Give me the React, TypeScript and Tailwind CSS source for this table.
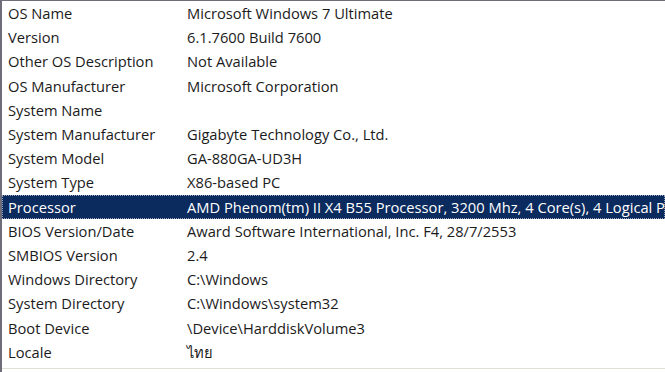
const rows: [string, string][] = [
  ['OS Name', 'Microsoft Windows 7 Ultimate'],
  ['Version', '6.1.7600 Build 7600'],
  ['Other OS Description', 'Not Available'],
  ['OS Manufacturer', 'Microsoft Corporation'],
  ['System Name', ''],
  ['System Manufacturer', 'Gigabyte Technology Co., Ltd.'],
  ['System Model', 'GA-880GA-UD3H'],
  ['System Type', 'X86-based PC'],
  ['Processor', 'AMD Phenom(tm) II X4 B55 Processor, 3200 Mhz, 4 Core(s), 4 Logical Processor(s)'],
  ['BIOS Version/Date', 'Award Software International, Inc. F4, 28/7/2553'],
  ['SMBIOS Version', '2.4'],
  ['Windows Directory', 'C:\\Windows'],
  ['System Directory', 'C:\\Windows\\system32'],
  ['Boot Device', '\\Device\\HarddiskVolume3'],
  ['Locale', 'ไทย'],
];

export default function App() {
  return (
    <div className="w-[665px] h-[372px] overflow-hidden bg-white border-l-2 border-t border-[#6e6e7a] font-['Open_Sans','Noto_Sans',sans-serif] text-[14.7px] text-[#1b1b1b]">
      {rows.map(([label, value]) => {
        const selected = label === 'Processor';
        return (
          <div
            key={label}
            className={
              selected
                ? 'flex items-center h-[24.2px] whitespace-nowrap bg-[#0b2a5e] text-white outline-1 outline-dotted outline-[#9aa6c0] -outline-offset-1'
                : 'flex items-center h-[24.2px] whitespace-nowrap'
            }
          >
            <div className="w-[185px] shrink-0 pl-[6px]">{label}</div>
            <div>{value}</div>
          </div>
        );
      })}
      <div className="mt-[4px] border-t border-[#dde2d2] h-[4px]" />
    </div>
  );
}
